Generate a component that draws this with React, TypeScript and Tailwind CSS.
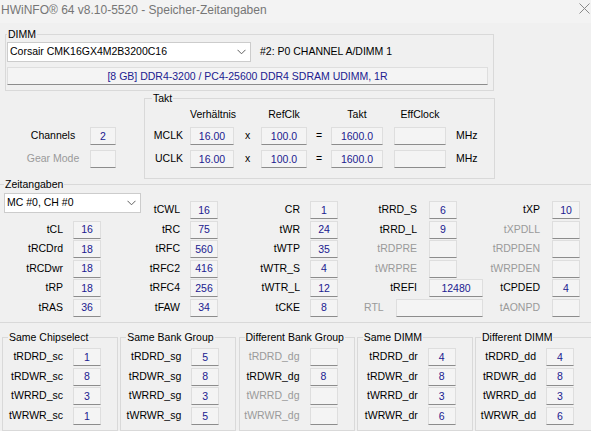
const boxBase =
  'h-[18px] flex items-center justify-center bg-[#f4f4f4] border border-[#dedede] border-b-[#8c8c8c] text-[#202090] leading-none';

const ValueBox = ({ value, wide }: { value?: string; wide?: string }) => (
  <div className={`${boxBase} ${wide ?? 'w-[28px]'} shrink-0`}>{value ?? ''}</div>
);

const Chevron = () => (
  <svg width="9" height="6" viewBox="0 0 9 6" className="shrink-0">
    <polyline points="0.5,0.8 4.5,4.8 8.5,0.8" fill="none" stroke="#606060" strokeWidth="1" />
  </svg>
);

const Legend = ({ text, left }: { text: string; left: string }) => (
  <span className={`absolute -top-[7px] ${left} px-[1px] bg-[#f0f0f0] leading-[12px] text-black`}>{text}</span>
);

type Cell = { label: string; value?: string; disabled?: boolean; wide?: boolean };

const timingRows: (Cell | null)[][] = [
  [null, { label: 'tCWL', value: '16' }, { label: 'CR', value: '1' }, { label: 'tRRD_S', value: '6' }, { label: 'tXP', value: '10' }],
  [{ label: 'tCL', value: '16' }, { label: 'tRC', value: '75' }, { label: 'tWR', value: '24' }, { label: 'tRRD_L', value: '9' }, { label: 'tXPDLL', disabled: true }],
  [{ label: 'tRCDrd', value: '18' }, { label: 'tRFC', value: '560' }, { label: 'tWTP', value: '35' }, { label: 'tRDPRE', disabled: true }, { label: 'tRDPDEN', disabled: true }],
  [{ label: 'tRCDwr', value: '18' }, { label: 'tRFC2', value: '416' }, { label: 'tWTR_S', value: '4' }, { label: 'tWRPRE', disabled: true }, { label: 'tWRPDEN', disabled: true }],
  [{ label: 'tRP', value: '18' }, { label: 'tRFC4', value: '256' }, { label: 'tWTR_L', value: '12' }, { label: 'tREFI', value: '12480', wide: true }, { label: 'tCPDED', value: '4' }],
  [{ label: 'tRAS', value: '36' }, { label: 'tFAW', value: '34' }, { label: 'tCKE', value: '8' }, null, { label: 'tAONPD', disabled: true }],
];

const labelPad = ['pr-[10px]', 'pr-[10px]', 'pr-[10px]', 'pr-[12px]', 'pr-[12px]'];

const groups: { title: string; rows: Cell[]; wide?: boolean }[] = [
  {
    title: 'Same Chipselect',
    rows: [
      { label: 'tRDRD_sc', value: '1' },
      { label: 'tRDWR_sc', value: '8' },
      { label: 'tWRRD_sc', value: '3' },
      { label: 'tWRWR_sc', value: '1' },
    ],
  },
  {
    title: 'Same Bank Group',
    rows: [
      { label: 'tRDRD_sg', value: '5' },
      { label: 'tRDWR_sg', value: '8' },
      { label: 'tWRRD_sg', value: '3' },
      { label: 'tWRWR_sg', value: '5' },
    ],
  },
  {
    title: 'Different Bank Group',
    rows: [
      { label: 'tRDRD_dg', disabled: true },
      { label: 'tRDWR_dg', value: '8' },
      { label: 'tWRRD_dg', disabled: true },
      { label: 'tWRWR_dg', disabled: true },
    ],
  },
  {
    title: 'Same DIMM',
    rows: [
      { label: 'tRDRD_dr', value: '4' },
      { label: 'tRDWR_dr', value: '8' },
      { label: 'tWRRD_dr', value: '3' },
      { label: 'tWRWR_dr', value: '6' },
    ],
  },
  {
    title: 'Different DIMM',
    wide: true,
    rows: [
      { label: 'tRDRD_dd', value: '4' },
      { label: 'tRDWR_dd', value: '8' },
      { label: 'tWRRD_dd', value: '3' },
      { label: 'tWRWR_dd', value: '6' },
    ],
  },
];

const clockRows = [
  { name: 'MCLK', ratio: '16.00', ref: '100.0', clk: '1600.0' },
  { name: 'UCLK', ratio: '16.00', ref: '100.0', clk: '1600.0' },
];

const App = () => {
  return (
    <div className="w-[591px] h-[431px] overflow-hidden bg-[#f0f0f0] text-[10.5px] text-black font-['Liberation_Sans',Arial,sans-serif] flex flex-col">
      {/* title bar */}
      <div className="h-[23px] shrink-0 bg-[#f3f3f3] flex items-start justify-between pl-[1px]">
        <span className="pt-[3px] leading-[14px] text-[12px] text-[#767676]">HWiNFO® 64 v8.10-5520 - Speicher-Zeitangaben</span>
        <svg width="11" height="11" viewBox="0 0 11 11" className="mt-[3px] mr-[1px]">
          <path d="M0.5 0.5 L10.5 10.5 M10.5 0.5 L0.5 10.5" stroke="#8a8a8a" strokeWidth="1" />
        </svg>
      </div>

      {/* DIMM */}
      <div className="relative ml-[5px] mt-[11px] w-[489px] h-[57px] shrink-0 border border-[#d9d9d9] px-[1px] pt-[7px]">
        <Legend text="DIMM" left="left-[1px]" />
        <div className="flex items-center">
          <div className="w-[244px] h-[20px] bg-white border border-[#cccccc] flex items-center justify-between pl-[2px] pr-[4px]">
            <span>Corsair CMK16GX4M2B3200C16</span>
            <Chevron />
          </div>
          <span className="ml-[9px]">#2: P0 CHANNEL A/DIMM 1</span>
        </div>
        <div className={`${boxBase} mt-[5px] w-[481px] text-[#2020a0]`}>
          [8 GB] DDR4-3200 / PC4-25600 DDR4 SDRAM UDIMM, 1R
        </div>
      </div>

      {/* Channels + Takt */}
      <div className="flex mt-[7px] shrink-0">
        <div className="w-[144px] pt-[29px] pl-[20px]">
          <div className="grid grid-cols-[66px_26px] gap-x-[4px] gap-y-[5px] items-center">
            <span className="text-center">Channels</span>
            <ValueBox value="2" wide="w-[26px]" />
            <span className="text-center text-[#9a9a9a]">Gear Mode</span>
            <ValueBox wide="w-[26px]" />
          </div>
        </div>
        <div className="relative w-[351px] h-[81px] border border-[#d9d9d9] pt-[9px]">
          <Legend text="Takt" left="left-[7px]" />
          <div className="grid grid-cols-[45px_44px_27px_46px_24px_52px_11px_52px_1fr] items-center leading-[12px]">
            <span />
            <span className="text-center">Verhältnis</span>
            <span />
            <span className="text-center">RefClk</span>
            <span />
            <span className="text-center">Takt</span>
            <span />
            <span className="text-center">EffClock</span>
            <span />
          </div>
          <div className="mt-[7px] grid grid-cols-[45px_44px_27px_46px_24px_52px_11px_52px_1fr] gap-y-[5px] items-center">
            {clockRows.map((r) => (
              <div key={r.name} className="contents">
                <span className="text-right pr-[7px]">{r.name}</span>
                <ValueBox value={r.ratio} wide="w-[44px]" />
                <span className="text-center">x</span>
                <ValueBox value={r.ref} wide="w-[46px]" />
                <span className="text-center">=</span>
                <ValueBox value={r.clk} wide="w-[52px]" />
                <span />
                <ValueBox wide="w-[52px]" />
                <span className="pl-[10px]">MHz</span>
              </div>
            ))}
          </div>
        </div>
      </div>

      {/* Zeitangaben */}
      <div className="relative mt-[5px] h-[139px] shrink-0 border-t border-b border-[#d9d9d9] pt-[16px]">
        <Legend text="Zeitangaben" left="left-[4px]" />
        <div className="grid grid-cols-[73px_28px_89px_28px_92px_28px_91px_28px_95px_28px] auto-rows-[18px] gap-y-[1.5px] items-center">
          {timingRows.map((row, ri) =>
            row.map((cell, ci) => {
              if (ri === 0 && ci === 0) {
                return (
                  <div key={`${ri}-${ci}`} className="col-span-2 self-start">
                    <div className="ml-[4px] -mt-[8px] w-[137px] h-[20px] bg-white border border-[#cccccc] flex items-center justify-between pl-[2px] pr-[4px]">
                      <span>MC #0, CH #0</span>
                      <Chevron />
                    </div>
                  </div>
                );
              }
              if (!cell) {
                return (
                  <div key={`${ri}-${ci}`} className="col-span-2 flex items-center pl-[26px]">
                    <span className="w-[32px] shrink-0 text-[#9a9a9a]">RTL</span>
                    <ValueBox wide="w-[87px]" />
                  </div>
                );
              }
              return (
                <div key={`${ri}-${ci}`} className="contents">
                  <span className={`text-right ${labelPad[ci]} ${cell.disabled ? 'text-[#9a9a9a]' : ''}`}>{cell.label}</span>
                  <ValueBox value={cell.value} wide={cell.wide ? 'w-[54px]' : undefined} />
                </div>
              );
            })
          )}
        </div>
      </div>

      {/* bottom groups */}
      <div className="flex mt-[14px] pl-[2px] gap-x-[2.25px] shrink-0">
        {groups.map((g) => (
          <div
            key={g.title}
            className={`relative ${g.wide ? 'w-[130px]' : 'w-[116px]'} h-[94px] shrink-0 border border-[#d9d9d9] pt-[10px]`}
          >
            <Legend text={g.title} left="left-[5px]" />
            <div className="grid grid-cols-[70px_28px] auto-rows-[18px] gap-y-[1.67px] items-center">
              {g.rows.map((r) => (
                <div key={r.label} className="contents">
                  <span className={`text-right pr-[10px] ${r.disabled ? 'text-[#9a9a9a]' : ''}`}>{r.label}</span>
                  <ValueBox value={r.value} />
                </div>
              ))}
            </div>
          </div>
        ))}
      </div>
    </div>
  );
};

export default App;
